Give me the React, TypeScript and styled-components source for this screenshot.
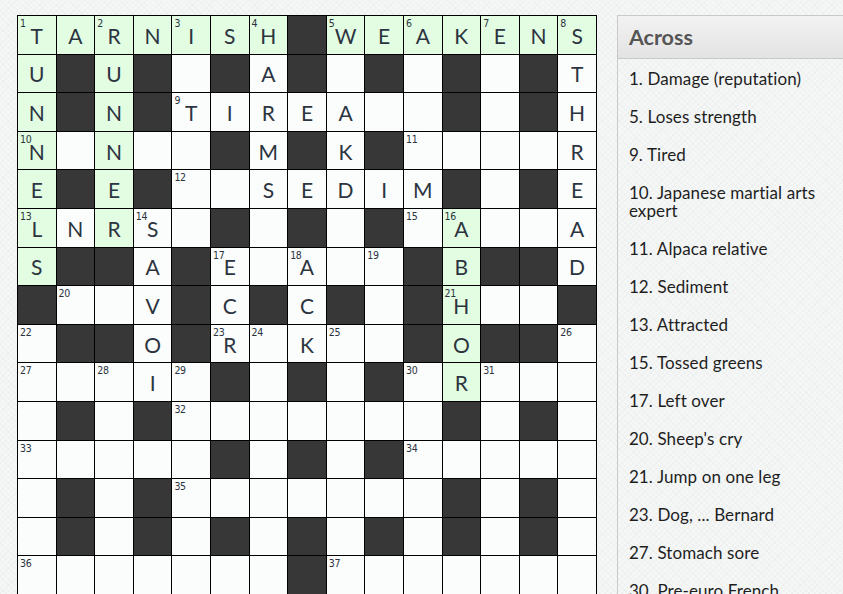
import React from "react";
import styled, { createGlobalStyle } from "styled-components";

const GlobalStyle = createGlobalStyle`
  html, body {
    margin: 0;
    padding: 0;
    height: 100%;
    overflow: hidden;
  }
  body {
    background-color: #f5f6f6;
    background-image:
      repeating-linear-gradient(45deg, rgba(0,0,0,0.018) 0 1px, transparent 1px 4px),
      repeating-linear-gradient(-45deg, rgba(0,0,0,0.018) 0 1px, transparent 1px 4px);
    font-family: "Lato", "Open Sans", sans-serif;
  }
`;

const Page = styled.div`
  display: flex;
  align-items: flex-start;
  gap: 20px;
  padding: 15px 0 0 17px;
  height: 594px;
  box-sizing: border-box;
`;

const Board = styled.div`
  flex: none;
  display: grid;
  grid-template-columns: repeat(15, 37.6px);
  grid-auto-rows: 37.6px;
  gap: 1px;
  padding: 1px;
  background: #000;
`;

type Kind = "black" | "green" | "white";

const Cell = styled.div<{ $kind: Kind }>`
  position: relative;
  display: flex;
  align-items: center;
  justify-content: center;
  background: ${(p) =>
    p.$kind === "black" ? "#373737" : p.$kind === "green" ? "#e2fde2" : "#fbfcfc"};
  color: #2c3440;
  font-family: "Lato", sans-serif;
  font-size: 21px;
  font-weight: 400;
  line-height: 1;
  padding-top: 1px;
  box-sizing: border-box;
`;

const Num = styled.span`
  position: absolute;
  top: 2px;
  left: 2px;
  font-family: "Liberation Sans Narrow", "DejaVu Sans Condensed", "Roboto", sans-serif;
  font-stretch: condensed;
  font-size: 10.5px;
  line-height: 1;
  color: #2b3340;
  letter-spacing: -0.3px;
`;

const Panel = styled.div`
  flex: none;
  width: 260px;
  height: 100%;
  border: 1px solid #c9c9c9;
  border-right: none;
  border-bottom: none;
  box-sizing: border-box;
  overflow: hidden;
`;

const PanelHeader = styled.div`
  height: 43px;
  display: flex;
  align-items: center;
  padding-left: 11px;
  background: linear-gradient(#f2f2f2, #e3e3e3);
  border-bottom: 1px solid #c9c9c9;
  box-sizing: border-box;
  font-family: "Lato", sans-serif;
  font-weight: 700;
  font-size: 21.5px;
  color: #555;
`;

const ClueList = styled.ul`
  list-style: none;
  margin: 0;
  padding: 1px 0 0 11px;
  width: 204px;
`;

const Clue = styled.li`
  padding: 10px 0;
  font-size: 17px;
  line-height: 18px;
  letter-spacing: 0.1px;
  color: #1e1e1e;
`;

const rows = [
  "TARNISH#WEAKENS",
  "U#U#.#A#.#.#.#T",
  "N#N#TIREA..#.#H",
  "N.N..#M#K#....R",
  "E#E#..SEDIM#.#E",
  "LNRS.#.#.#.A..A",
  "S##A#E.A..#B##D",
  "#..V#C#C#.#H..#",
  ".##O#R.K..#O##.",
  "...I.#.#.#.R...",
  ".#.#.......#.#.",
  ".....#.#.#.....",
  ".#.#.......#.#.",
  ".#.#.#.#.#.#.#.",
  ".......#.......",
];

const greens = new Set<string>();
for (let c = 0; c < 15; c++) if (rows[0][c] !== "#") greens.add(`0,${c}`);
for (let r = 0; r <= 6; r++) greens.add(`${r},0`);
for (let r = 0; r <= 5; r++) greens.add(`${r},2`);
for (let r = 5; r <= 9; r++) greens.add(`${r},11`);

const numbers: Record<string, number> = {
  "0,0": 1, "0,2": 2, "0,4": 3, "0,6": 4, "0,8": 5, "0,10": 6, "0,12": 7, "0,14": 8,
  "2,4": 9, "3,0": 10, "3,10": 11, "4,4": 12, "5,0": 13, "5,3": 14, "5,10": 15, "5,11": 16,
  "6,5": 17, "6,7": 18, "6,9": 19, "7,1": 20, "7,11": 21, "8,0": 22, "8,5": 23, "8,6": 24,
  "8,8": 25, "8,14": 26, "9,0": 27, "9,2": 28, "9,4": 29, "9,10": 30, "9,12": 31,
  "10,4": 32, "11,0": 33, "11,10": 34, "12,4": 35, "14,0": 36, "14,8": 37,
};

const clues = [
  "1. Damage (reputation)",
  "5. Loses strength",
  "9. Tired",
  "10. Japanese martial arts expert",
  "11. Alpaca relative",
  "12. Sediment",
  "13. Attracted",
  "15. Tossed greens",
  "17. Left over",
  "20. Sheep's cry",
  "21. Jump on one leg",
  "23. Dog, ... Bernard",
  "27. Stomach sore",
  "30. Pre-euro French currency",
];

export default function App() {
  return (
    <>
      <GlobalStyle />
      <Page>
        <Board>
          {rows.map((row, r) =>
            row.split("").map((ch, c) => {
              const key = `${r},${c}`;
              const kind: Kind = ch === "#" ? "black" : greens.has(key) ? "green" : "white";
              const n = numbers[key];
              return (
                <Cell key={key} $kind={kind}>
                  {n !== undefined && <Num>{n}</Num>}
                  {ch !== "#" && ch !== "." ? ch : null}
                </Cell>
              );
            })
          )}
        </Board>
        <Panel>
          <PanelHeader>Across</PanelHeader>
          <ClueList>
            {clues.map((c) => (
              <Clue key={c}>{c}</Clue>
            ))}
          </ClueList>
        </Panel>
      </Page>
    </>
  );
}
